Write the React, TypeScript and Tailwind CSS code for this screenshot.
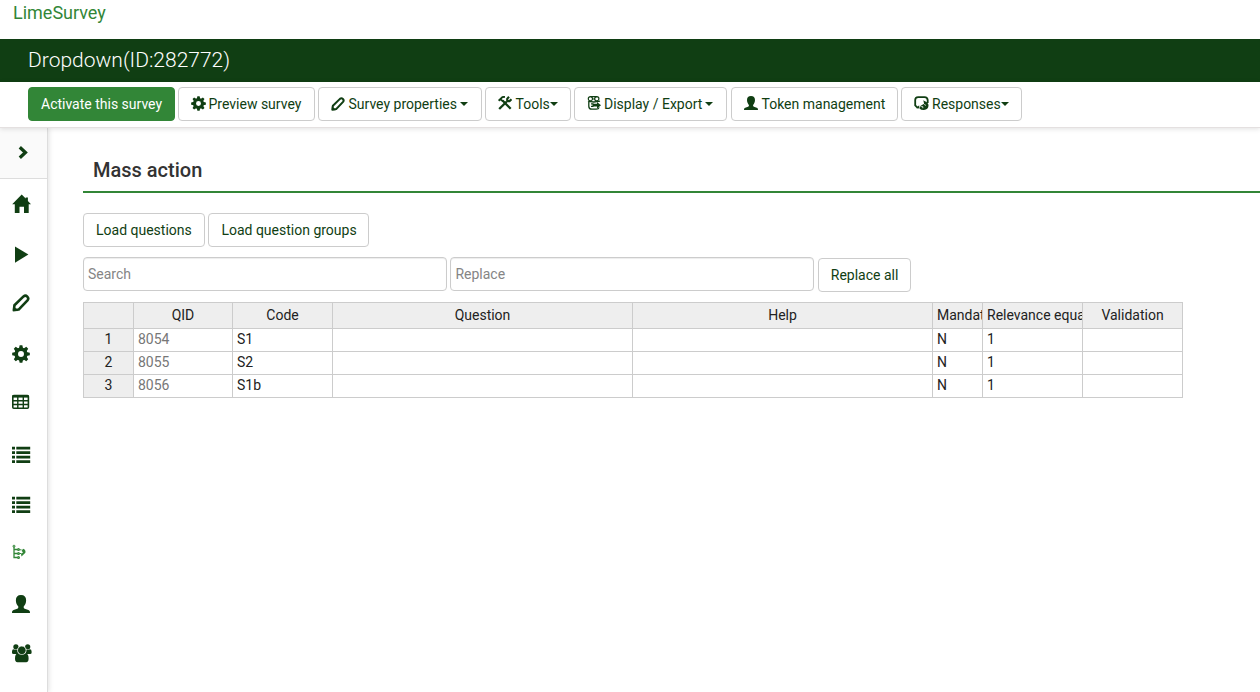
import type { ReactNode } from 'react';

interface IconProps {
    className?: string;
}

const COG_TEETH = [0, 45, 90, 135];

function CogIcon({ className }: IconProps) {
    return (
        <svg viewBox="0 0 20 20" className={className} fill="currentColor">
            {COG_TEETH.map((angle) => (
                <path key={angle} transform={`rotate(${angle} 10 10)`} d="M8.500 .2h3l.8 3.800H7.700zM7.700 16h4.600l-.8 3.800h-3z" />
            ))}
            <circle cx="10" cy="10" r="5.300" fill="none" stroke="currentColor" strokeWidth="4" />
        </svg>
    );
}

function PencilIcon({ className }: IconProps) {
    return (
        <svg viewBox="0 0 20 20" className={className} fill="none" stroke="currentColor" strokeWidth="2.900">
            <path d="M2.200 17.800l.5-5.300L12.800 2.700q2.200-1.800 4.200.2t.2 4.100L7.400 17.300z" strokeLinejoin="round" />
            <path d="M.8 19.200l.4-6 5.800 5.600z" fill="currentColor" stroke="none" />
        </svg>
    );
}

function UserIcon({ className }: IconProps) {
    return (
        <svg viewBox="0 0 20 20" className={className} fill="currentColor">
            <path d="M10 0c3.800 0 5.700 2.200 5.700 5.800 0 3-1.200 5.500-2.700 6.900v1.200c0 .7.400 1 1.200 1.300l4 1.500c1.300.5 1.800 1.400 1.800 3.300H0c0-1.900.5-2.800 1.800-3.300l4-1.500c.8-.3 1.200-.6 1.200-1.300v-1.200C5.500 11.300 4.300 8.800 4.300 5.800 4.300 2.200 6.200 0 10 0z" />
        </svg>
    );
}

function ToolsIcon({ className }: IconProps) {
    return (
        <svg viewBox="0 0 14 14" className={className} fill="none" stroke="currentColor">
            <path d="M4.500 4.500l8.200 8.300" strokeWidth="2.300" />
            <path d="M1.200 13l7.300-7.300" strokeWidth="2.300" />
            <path d="M.6 4.700l3.800-3.600 2.600-.3M2.200 3.300l2.900 2" strokeWidth="1.900" />
            <path d="M11 .8L9.200 2.800v2.300h2.300l2-1.900" strokeWidth="2.100" />
        </svg>
    );
}

function ExportIcon({ className }: IconProps) {
    return (
        <svg viewBox="0 0 14 14" className={className} fill="none" stroke="currentColor">
            <circle cx="3.400" cy="2.700" r="2.100" strokeWidth="1.200" />
            <circle cx="9.800" cy="2.700" r="2.100" strokeWidth="1.200" />
            <path d="M3.500.7h6.500M5.500 3h2.500" strokeWidth="1.200" />
            <path d="M1 5.200q5.500 1.600 12 0M1.800 5.500v4.700q0 3 3 3h4.500q2.300 0 2.900-1.800" strokeWidth="1.300" />
            <path d="M4 7.900h2.500M4 10.400h2.500" strokeWidth="1.100" />
            <path d="M5.500 7.800H10V5.900l4 3.300-4 3.400v-2H5.500z" fill="currentColor" stroke="none" />
        </svg>
    );
}

function ResponsesIcon({ className }: IconProps) {
    return (
        <svg viewBox="0 0 15 14" className={className} fill="none" stroke="currentColor">
            <path d="M4.800 11.300H3.200L1.200 9.300V4q0-2.800 3-2.900h6.300q3 .1 3.200 3V7" strokeWidth="1.800" />
            <path d="M2.500 12.300h3l-.4-3z" fill="currentColor" stroke="none" />
            <path d="M9.300 4.300l1.700.9q3.600 1.500 3.500 4.500-.3 4-4.500 4.200-3 .1-4.500-1.500l1.200-2.600 3.400-2z" fill="currentColor" stroke="none" />
            <path d="M7.200 10.600h1.600v1.600M10.500 8l1 1.700" stroke="white" strokeWidth=".8" />
        </svg>
    );
}

function ChevronIcon({ className }: IconProps) {
    return (
        <svg viewBox="0 0 20 20" className={className} fill="none" stroke="currentColor" strokeWidth="3.300">
            <path d="M7.800 4.300l5.600 5.200-5.600 5.200" />
        </svg>
    );
}

function HomeIcon({ className }: IconProps) {
    return (
        <svg viewBox="0 0 20 20" className={className} fill="currentColor">
            <path d="M9.700.6l4 4V3.500h2.200v3.500l3.100 3.200h-2.300V19h-4.700v-6.200H7.500V19H2.800v-8.800H.2z" />
        </svg>
    );
}

function PlayIcon({ className }: IconProps) {
    return (
        <svg viewBox="0 0 20 20" className={className} fill="currentColor">
            <path d="M3 2.500l13.400 8.100L3 18.700z" />
        </svg>
    );
}

function GridIcon({ className }: IconProps) {
    return (
        <svg viewBox="0 0 20 20" className={className} fill="none" stroke="currentColor">
            <rect x=".8" y="1.500" width="15.600" height="12.800" rx="1" strokeWidth="1.600" />
            <path d="M.5 2.300h16" strokeWidth="2.600" />
            <path d="M1 6.800h15.500M1 10.500h15.500M5.800 3v11M11.300 3v11" strokeWidth="1.400" />
        </svg>
    );
}

function ListIcon({ className }: IconProps) {
    return (
        <svg viewBox="0 0 20 20" className={className} fill="currentColor">
            <path d="M0 2.700h3v2.800H0zM4.300 2.700h13.900v2.800H4.300zM0 7.200h3V10H0zM4.300 7.200h13.900V10H4.300zM0 11.700h3v2.800H0zM4.300 11.700h13.900v2.800H4.300zM0 16.200h3V19H0zM4.300 16.200h13.900V19H4.300z" />
        </svg>
    );
}

function TreeIcon({ className }: IconProps) {
    return (
        <svg viewBox="0 0 20 20" className={className} fill="none" stroke="currentColor">
            <path d="M2 2.500v11h3.500M2 5.500h3.500M2 9.500h3.500" strokeWidth="1.300" />
            <circle cx="2" cy="2.200" r="1" />
            <circle cx="6.500" cy="5.500" r=".9" strokeWidth="1.200" />
            <circle cx="6.500" cy="9.500" r=".9" strokeWidth="1.200" />
            <circle cx="6.500" cy="13.500" r=".9" strokeWidth="1.200" />
            <path d="M8 5.800h1.500M8 9.500h1.500" />
            <path d="M11 4.800q3 .8 2.400 4L9.500 12.400l-.5-2.200L11 8.200 9.600 7z" fill="currentColor" stroke="none" />
        </svg>
    );
}

function GroupIcon({ className }: IconProps) {
    return (
        <svg viewBox="0 0 20 20" className={className} fill="currentColor">
            <circle cx="3.900" cy="2.800" r="2.600" />
            <circle cx="15.700" cy="2.800" r="2.600" />
            <path d="M0 8.800V7.500Q0 5.300 1.700 5.200q2.300 1.200 4.300.2v4.700H1.500Q0 10 0 8.800zM19.600 8.800V7.500q0-2.200-1.700-2.300-2.300 1.200-4.300.2v4.700h4.500q1.500-.1 1.500-1.300z" />
            <circle cx="9.800" cy="6.300" r="4.300" stroke="white" strokeWidth=".8" />
            <path d="M3 14.500q0-5 3-5.300 1.600 1.600 3.800 1.600t3.800-1.600q3 .3 3 5.300 0 3.800-2.500 3.800H5.500Q3 18.300 3 14.500z" />
        </svg>
    );
}

function Caret({ className }: IconProps) {
    return (
        <svg viewBox="0 0 8 4" className={`w-2 h-1 shrink-0 ${className ?? ''}`} fill="currentColor">
            <path d="M0 0h8L4 4z" />
        </svg>
    );
}

const BUTTON_BASE = 'flex h-[34px] shrink-0 items-center whitespace-nowrap rounded border pl-3 text-sm';

function Button({ children, className = '', primary = false }: { children: ReactNode; className?: string; primary?: boolean }) {
    const color = primary ? 'border-[#328637] bg-[#328637] text-white' : 'border-[#ccc] bg-white text-[#103e13]';
    return (
        <button className={`${BUTTON_BASE} ${color} ${className}`}>
            {children}
        </button>
    );
}

const SIDE_ITEMS = [
    { id: 'home', Icon: HomeIcon },
    { id: 'run', Icon: PlayIcon },
    { id: 'edit', Icon: PencilIcon, className: 'h-[18px] w-[18px] mb-[3px]' },
    { id: 'settings', Icon: CogIcon, className: 'h-[18px] w-[18px]' },
    { id: 'grid', Icon: GridIcon },
    { id: 'questions', Icon: ListIcon },
    { id: 'groups', Icon: ListIcon },
    { id: 'tree', Icon: TreeIcon, className: 'h-5 w-5 text-[#328637]' },
    { id: 'user', Icon: UserIcon, className: 'h-[18px] w-[18px]' },
    { id: 'participants', Icon: GroupIcon },
];

const COLUMNS = [
    { title: '', width: 50 },
    { title: 'QID', width: 99 },
    { title: 'Code', width: 100 },
    { title: 'Question', width: 300 },
    { title: 'Help', width: 300 },
    { title: 'Mandatory', width: 50 },
    { title: 'Relevance equation', width: 100 },
    { title: 'Validation', width: 100 },
];

const ROWS = [
    ['1', '8054', 'S1', '', '', 'N', '1', ''],
    ['2', '8055', 'S2', '', '', 'N', '1', ''],
    ['3', '8056', 'S1b', '', '', 'N', '1', ''],
];

function cellStyle(col: number) {
    if (col === 0) return 'bg-[#eee] text-center text-[#222]';
    if (col === 1) return 'text-[#777]';
    return 'text-[#222]';
}

function QuestionTable() {
    return (
        <table className="mt-[10px] w-[1100px] table-fixed border-separate border-spacing-0 border-l border-t border-[#ccc] text-sm">
            <colgroup>
                {COLUMNS.map((col, i) => <col key={i} style={{ width: col.width }} />)}
            </colgroup>
            <thead>
                <tr>
                    {COLUMNS.map((col, i) => (
                        <th key={i} className="h-[26px] border-b border-r border-[#ccc] bg-[#eee] p-0 font-normal text-[#222]">
                            <div className={`overflow-hidden whitespace-nowrap px-1 leading-[25px] ${col.title.length > 10 || col.width === 50 ? 'text-left' : 'text-center'}`}>{col.title}</div>
                        </th>
                    ))}
                </tr>
            </thead>
            <tbody>
                {ROWS.map((row) => (
                    <tr key={row[0]}>
                        {row.map((value, i) => (
                            <td key={i} className={`h-[23px] border-b border-r border-[#ccc] px-1 py-0 align-top leading-[21px] ${cellStyle(i)}`}>{value}</td>
                        ))}
                    </tr>
                ))}
            </tbody>
        </table>
    );
}

export default function App() {
    return (
        <div className="flex h-[692px] w-[1260px] flex-col overflow-hidden bg-white font-['Roboto',sans-serif] text-[#333]">
            <header className="h-[39px] shrink-0 pl-[13px] text-lg leading-[26px] text-[#328637]">LimeSurvey</header>
            <div className="h-[43px] shrink-0 bg-[#103e13] pl-7 text-[21px] font-light leading-[42px] text-white">
                Dropdown(ID:282772)
            </div>

            <nav className="relative flex h-[46px] shrink-0 gap-[3px] border-b border-[#e4e0e0] bg-white pl-7 pt-[5px] shadow-[0_1px_5px_rgba(0,0,0,0.12)]">
                <Button primary className="w-[147px]">Activate this survey</Button>
                <Button className="w-[137px]"><CogIcon className="mr-[2.5px] mb-0.5 h-[15px] w-[15px]" />Preview survey</Button>
                <Button className="w-[164px]"><PencilIcon className="mr-[3.5px] mb-px h-[14px] w-[14px]" />Survey properties<Caret className="ml-[3px]" /></Button>
                <Button className="w-[86px]"><ToolsIcon className="mr-[3.5px] mb-0.5 h-[14px] w-[14px]" />Tools<Caret /></Button>
                <Button className="w-[153px]"><ExportIcon className="mr-[3px] mb-0.5 h-[14px] w-[14px]" />Display / Export<Caret className="ml-[3px]" /></Button>
                <Button className="ml-px w-[167px]"><UserIcon className="mr-[3.5px] mb-0.5 h-[14px] w-[14px]" />Token management</Button>
                <Button className="w-[121px]"><ResponsesIcon className="mr-[3px] mb-0.5 h-[14px] w-[15px]" />Responses<Caret /></Button>
            </nav>

            <div className="flex min-h-0 flex-1">
                <aside className="w-12 shrink-0 border-r border-[#ddd] text-[#103e13] shadow-[1px_0_5px_rgba(0,0,0,0.12)]">
                    <div className="flex h-[51px] items-center border-b border-[#ddd] bg-[#fafafa] pl-3">
                        <ChevronIcon className="h-5 w-5" />
                    </div>
                    {SIDE_ITEMS.map(({ id, Icon, className }) => (
                        <div key={id} className="flex h-[50px] items-center pl-3">
                            <Icon className={className ?? 'h-5 w-5'} />
                        </div>
                    ))}
                </aside>

                <main className="min-w-0 flex-1 pl-[35px]">
                    <h3 className="h-[65px] border-b-2 border-[#328637] pl-[10px] pt-[30px] text-xl font-medium leading-6">Mass action</h3>
                    <div className="mt-5 flex gap-[3.4px]">
                        <Button className="w-[122px]">Load questions</Button>
                        <Button className="w-[161px]">Load question groups</Button>
                    </div>
                    <div className="mt-[10px] flex h-[35px] gap-[3.4px]">
                        <input placeholder="Search" className="h-[34px] w-[364px] rounded-sm border border-[#ccc] px-1 text-sm shadow-[inset_0_1px_1px_rgba(0,0,0,0.075)] placeholder:text-[#858585]" />
                        <input placeholder="Replace" className="h-[34px] w-[364px] rounded-sm border border-[#ccc] px-1 text-sm shadow-[inset_0_1px_1px_rgba(0,0,0,0.075)] placeholder:text-[#858585]" />
                        <Button className="mt-px w-[93px]">Replace all</Button>
                    </div>
                    <QuestionTable />
                </main>
            </div>
        </div>
    );
}
